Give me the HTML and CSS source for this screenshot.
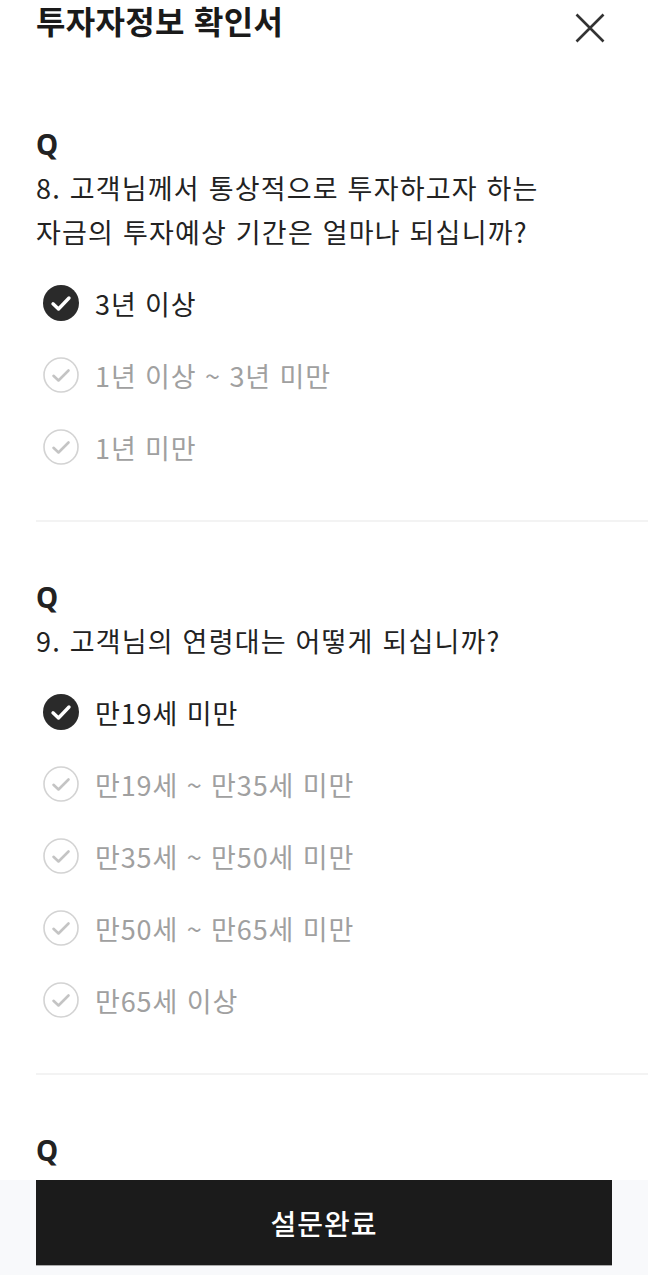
FILE: index.html
```html
<!DOCTYPE html>
<html lang="ko">
<head>
<meta charset="utf-8">
<title>투자자정보 확인서</title>
<link rel="stylesheet" href="styles.css">
</head>
<body>
<div class="page">
  <header class="header">
    <h1 class="title">투자자정보 확인서</h1>
    <button class="close" aria-label="닫기">
      <svg width="32" height="32" viewBox="0 0 32 32"><path d="M2.5 2.5 L29.5 29.5 M29.5 2.5 L2.5 29.5" stroke="#333" stroke-width="2.6" fill="none"/></svg>
    </button>
  </header>

  <section class="section">
    <div class="q">Q</div>
    <p class="question">8. 고객님께서 통상적으로 투자하고자 하는<br>자금의 투자예상 기간은 얼마나 되십니까?</p>
    <ul class="options">
      <li class="option selected"><span class="check"><svg viewBox="0 0 36 36" width="36" height="36"><circle cx="18" cy="18" r="18" fill="#2a2a2a"/><path d="M10 18.8 L15.5 24 L26 13" stroke="#fff" stroke-width="3.4" fill="none" stroke-linecap="round" stroke-linejoin="round"/></svg></span><span>3년 이상</span></li>
      <li class="option"><span class="check"><svg viewBox="0 0 36 36" width="36" height="36"><circle cx="18" cy="18" r="17" fill="none" stroke="#d3d3d3" stroke-width="1.6"/><path d="M10.5 18.8 L15.5 23.5 L25.5 13.5" stroke="#c4c4c4" stroke-width="2.6" fill="none" stroke-linecap="round" stroke-linejoin="round"/></svg></span><span>1년 이상 ~ 3년 미만</span></li>
      <li class="option"><span class="check"><svg viewBox="0 0 36 36" width="36" height="36"><circle cx="18" cy="18" r="17" fill="none" stroke="#d3d3d3" stroke-width="1.6"/><path d="M10.5 18.8 L15.5 23.5 L25.5 13.5" stroke="#c4c4c4" stroke-width="2.6" fill="none" stroke-linecap="round" stroke-linejoin="round"/></svg></span><span>1년 미만</span></li>
    </ul>
  </section>

  <section class="section">
    <div class="q">Q</div>
    <p class="question">9. 고객님의 연령대는 어떻게 되십니까?</p>
    <ul class="options">
      <li class="option selected"><span class="check"><svg viewBox="0 0 36 36" width="36" height="36"><circle cx="18" cy="18" r="18" fill="#2a2a2a"/><path d="M10 18.8 L15.5 24 L26 13" stroke="#fff" stroke-width="3.4" fill="none" stroke-linecap="round" stroke-linejoin="round"/></svg></span><span>만19세 미만</span></li>
      <li class="option"><span class="check"><svg viewBox="0 0 36 36" width="36" height="36"><circle cx="18" cy="18" r="17" fill="none" stroke="#d3d3d3" stroke-width="1.6"/><path d="M10.5 18.8 L15.5 23.5 L25.5 13.5" stroke="#c4c4c4" stroke-width="2.6" fill="none" stroke-linecap="round" stroke-linejoin="round"/></svg></span><span>만19세 ~ 만35세 미만</span></li>
      <li class="option"><span class="check"><svg viewBox="0 0 36 36" width="36" height="36"><circle cx="18" cy="18" r="17" fill="none" stroke="#d3d3d3" stroke-width="1.6"/><path d="M10.5 18.8 L15.5 23.5 L25.5 13.5" stroke="#c4c4c4" stroke-width="2.6" fill="none" stroke-linecap="round" stroke-linejoin="round"/></svg></span><span>만35세 ~ 만50세 미만</span></li>
      <li class="option"><span class="check"><svg viewBox="0 0 36 36" width="36" height="36"><circle cx="18" cy="18" r="17" fill="none" stroke="#d3d3d3" stroke-width="1.6"/><path d="M10.5 18.8 L15.5 23.5 L25.5 13.5" stroke="#c4c4c4" stroke-width="2.6" fill="none" stroke-linecap="round" stroke-linejoin="round"/></svg></span><span>만50세 ~ 만65세 미만</span></li>
      <li class="option"><span class="check"><svg viewBox="0 0 36 36" width="36" height="36"><circle cx="18" cy="18" r="17" fill="none" stroke="#d3d3d3" stroke-width="1.6"/><path d="M10.5 18.8 L15.5 23.5 L25.5 13.5" stroke="#c4c4c4" stroke-width="2.6" fill="none" stroke-linecap="round" stroke-linejoin="round"/></svg></span><span>만65세 이상</span></li>
    </ul>
  </section>

  <section class="section last">
    <div class="q">Q</div>
  </section>
</div>

<div class="footer">
  <button class="submit">설문완료</button>
</div>
</body>
</html>
```

FILE: styles.css
```css
* { box-sizing: border-box; }
html, body { margin: 0; padding: 0; background: #fff; }
body {
  font-family: "Noto Sans CJK KR", "Noto Sans", sans-serif;
  color: #222;
  width: 648px;
  height: 1275px;
  overflow: hidden;
}
.page { padding-left: 36px; }
.header {
  height: 69px;
  display: flex;
  justify-content: space-between;
  align-items: flex-start;
  padding-right: 42px;
}
.title {
  margin: 0;
  font-size: 32px;
  line-height: 40px;
  font-weight: 700;
  color: #1a1a1a;
  letter-spacing: 0.3px;
}
.close {
  border: 0;
  background: none;
  padding: 0;
  margin-top: 12px;
  width: 32px;
  height: 32px;
  display: flex;
}
.section {
  padding-top: 55px;
  padding-bottom: 37px;
  border-bottom: 2px solid #f3f3f3;
}
.section.last { border-bottom: 0; padding-bottom: 200px; }
.q {
  font-family: "Noto Sans", sans-serif;
  font-weight: 700;
  font-size: 28px;
  line-height: 40px;
  color: #222;
}
.question {
  margin: 2px 0 0;
  font-size: 27px;
  line-height: 44px;
  color: #222;
  letter-spacing: 1.2px;
}
.options {
  list-style: none;
  margin: 13px 0 0;
  padding: 0;
}
.option {
  height: 72px;
  display: flex;
  align-items: center;
  gap: 16px;
  padding-left: 7px;
  font-size: 27px;
  color: #a0a0a0;
  letter-spacing: 0.9px;
}
.option.selected { color: #222; }
.check { width: 36px; height: 36px; display: flex; }
.footer {
  position: fixed;
  left: 0;
  right: 0;
  bottom: 0;
  height: 95px;
  background: #f8f9fb;
  padding: 0 36px 9px;
}
.submit {
  width: 100%;
  height: 86px;
  border: 0;
  border-bottom: 1px solid #aaa;
  background: #1b1b1b;
  color: #fff;
  font-family: "Noto Sans CJK KR", sans-serif;
  font-size: 28px;
  font-weight: 500;
  letter-spacing: 1px;
}
```
